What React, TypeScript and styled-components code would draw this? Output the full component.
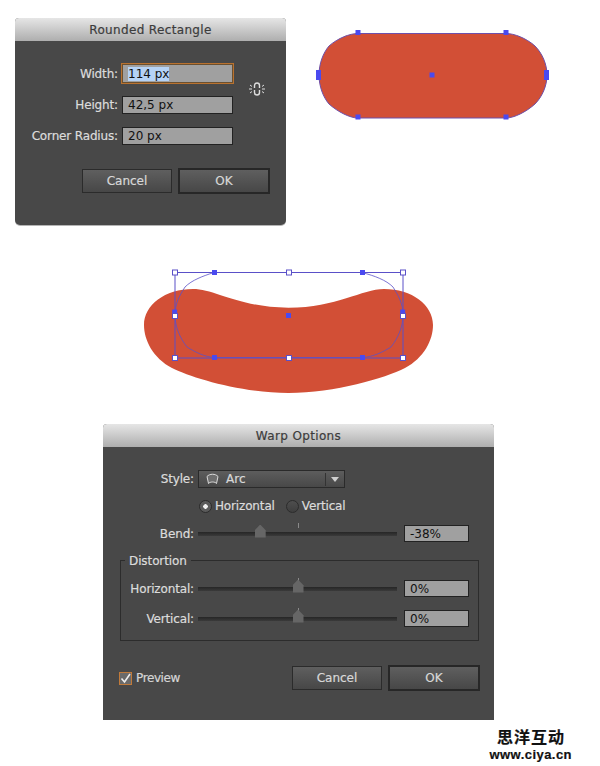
import * as React from "react"
import styled, { createGlobalStyle } from "styled-components"

const GlobalStyle = createGlobalStyle`
  html, body {
    margin: 0;
    padding: 0;
    background: #fff;
  }
  * {
    box-sizing: border-box;
  }
`

const Page = styled.div`
  width: 600px;
  height: 766px;
  overflow: hidden;
  background: #fff;
  font-family: "DejaVu Sans", "Liberation Sans", sans-serif;
  font-size: 12px;
  -webkit-text-stroke: 0.2px;
`

const TopRow = styled.div`
  display: flex;
  align-items: flex-start;
  padding: 18px 0 0 15px;
`

const Artboard = styled.svg<{ $left: number; $top: number }>`
  display: block;
  flex: none;
  margin-left: ${(p) => p.$left}px;
  margin-top: ${(p) => p.$top}px;
`

const Dialog = styled.div<{ $width: number; $height: number; $left?: number; $top?: number; $radius: number }>`
  flex: none;
  display: flex;
  flex-direction: column;
  width: ${(p) => p.$width}px;
  height: ${(p) => p.$height}px;
  margin-left: ${(p) => p.$left ?? 0}px;
  margin-top: ${(p) => p.$top ?? 0}px;
  background: #484848;
  border-radius: 4px 4px ${(p) => p.$radius}px ${(p) => p.$radius}px;
  box-shadow: ${(p) => (p.$radius ? "0 1px 0 #b4b4b4" : "none")};
  overflow: hidden;
`

const TitleBar = styled.div`
  height: 23px;
  flex: none;
  display: flex;
  align-items: center;
  justify-content: center;
  background: linear-gradient(#e6e6e6, #aeaeae);
  color: #3c3c3c;
  font-size: 12px;
  letter-spacing: 0.35px;
`

const FieldGrid = styled.div`
  display: grid;
  grid-template-columns: 103px 111px 40px;
  column-gap: 4px;
  row-gap: 13px;
  margin-top: 23px;
  align-items: center;
`

const Label = styled.label`
  color: #dcdcdc;
  font-size: 12px;
  letter-spacing: -0.15px;
  text-align: right;
  white-space: nowrap;
`

const Input = styled.div<{ $focused?: boolean; $height?: number }>`
  height: ${(p) => p.$height ?? 18}px;
  display: flex;
  align-items: center;
  padding-left: 5px;
  background: #a0a0a0;
  border: 1px solid #222;
  color: #111;
  font-size: 12px;
  white-space: nowrap;
  -webkit-text-stroke: 0;
  ${(p) => p.$focused && "outline: 1px solid #b9722f; outline-offset: 0; border-color: #6b5030;"}
`

const Selected = styled.span`
  background: #b5d3f6;
  color: #111;
`

const LinkSlot = styled.div`
  grid-column: 3;
  grid-row: 1 / span 2;
  padding-left: 11px;
  display: flex;
  align-items: center;
`

const Footer = styled.div<{ $top: number; $right: number; $left?: number }>`
  display: flex;
  align-items: center;
  justify-content: flex-end;
  gap: 6px;
  margin-top: ${(p) => p.$top}px;
  padding-right: ${(p) => p.$right}px;
  padding-left: ${(p) => p.$left ?? 0}px;
`

const Button = styled.div<{ $primary?: boolean }>`
  width: ${(p) => (p.$primary ? 92 : 90)}px;
  height: ${(p) => (p.$primary ? 26 : 24)}px;
  display: flex;
  align-items: center;
  justify-content: center;
  background: linear-gradient(#5f5f5f, #474747);
  border: ${(p) => (p.$primary ? "2px solid #272727" : "1px solid #2b2b2b")};
  color: #d8d8d8;
  font-size: 12px;
`

const PreviewCheck = styled.div`
  display: flex;
  align-items: center;
  gap: 4px;
  margin-right: auto;
  color: #d6d6d6;
  letter-spacing: -0.4px;
`

const CheckBox = styled.div`
  width: 13px;
  height: 13px;
  display: flex;
  align-items: center;
  justify-content: center;
  background: #6a6a6a;
  border: 1px solid #c17a3a;
`

const Row = styled.div<{ $top: number; $columns: string }>`
  display: grid;
  grid-template-columns: ${(p) => p.$columns};
  align-items: center;
  column-gap: 4px;
  margin-top: ${(p) => p.$top}px;
`

const Select = styled.div`
  height: 18px;
  display: flex;
  align-items: center;
  padding-left: 7px;
  gap: 7px;
  background: linear-gradient(#5d5d5d, #484848);
  border: 1px solid #2a2a2a;
  color: #d8d8d8;
`

const SelectArrow = styled.div`
  margin-left: auto;
  width: 19px;
  height: 13px;
  display: flex;
  align-items: center;
  justify-content: center;
  border-left: 1px solid #333;
  &::after {
    content: "";
    border-left: 4px solid transparent;
    border-right: 4px solid transparent;
    border-top: 5px solid #cfcfcf;
  }
`

const RadioGroup = styled.div`
  grid-column: 2;
  display: flex;
  align-items: center;
  height: 16px;
  color: #dcdcdc;
  letter-spacing: -0.15px;
`

const Radio = styled.div<{ $checked?: boolean; $gap?: number }>`
  width: 13px;
  height: 13px;
  flex: none;
  margin-right: 3px;
  margin-left: ${(p) => p.$gap ?? 1}px;
  border-radius: 50%;
  border: 1px solid #2c2c2c;
  background: ${(p) =>
    p.$checked
      ? "radial-gradient(circle, #f0f0f0 0 2px, #5a5a5a 2.5px)"
      : "linear-gradient(#4e4e4e, #3e3e3e)"};
`

const Track = styled.div`
  position: relative;
  height: 4px;
  margin-right: 3px;
  background: linear-gradient(#262626, #3a3a3a);
`

const Tick = styled.div`
  position: absolute;
  left: 50%;
  top: -9px;
  width: 1px;
  height: 5px;
  background: #8a8a8a;
`

const Thumb = styled.div<{ $value: number }>`
  position: absolute;
  left: ${(p) => (p.$value + 100) / 2}%;
  top: -7px;
  width: 11px;
  height: 13px;
  margin-left: -5px;
  background: #666;
  clip-path: polygon(50% 0, 100% 45%, 100% 100%, 0 100%, 0 45%);
`

const Group = styled.div`
  position: relative;
  width: 359px;
  height: 81px;
  margin: 18px 0 0 17px;
  padding-top: 19px;
  border: 1px solid #2c2c2c;
`

const Legend = styled.span`
  position: absolute;
  left: 4px;
  top: -7px;
  padding: 0 4px;
  background: #484848;
  color: #dcdcdc;
  line-height: 14px;
  letter-spacing: -0.1px;
`

const Watermark = styled.div`
  display: flex;
  flex-direction: column;
  align-items: flex-end;
  padding: 7px 28px 0 0;
  color: #111;
  font-weight: 700;
`

const WatermarkTitle = styled.div`
  font-family: "Noto Sans CJK SC", sans-serif;
  font-size: 16px;
  line-height: 18px;
  letter-spacing: 1px;
  margin: 0 7px 3px 0;
`

const WatermarkUrl = styled.div`
  font-family: "Liberation Sans", sans-serif;
  font-size: 13px;
  line-height: 13px;
  letter-spacing: 0.45px;
`

const LinkIcon: React.FC = () => (
  <svg width="18" height="18" viewBox="0 0 18 18" fill="none" stroke="#dedede">
    <path d="M6.5 8V5.5a2.5 2.5 0 0 1 5 0V8M6.5 10v2.5a2.5 2.5 0 0 0 5 0V10" strokeWidth="1.4" />
    <path d="M1 9h3M14 9h3M2 5l2 1.5M16 5l-2 1.5M2 13l2-1.5M16 13l-2-1.5" strokeWidth="1" />
  </svg>
)

const ArcIcon: React.FC = () => (
  <svg width="13" height="12" viewBox="0 0 13 12" fill="#6e6e6e" stroke="#dcdcdc">
    <path d="M1 3.5C3.5 0.5 9.5 0.5 12 3.5L10.5 10.5C9 8.5 4 8.5 2.5 10.5Z" />
  </svg>
)

const Handle: React.FC<{ x: number; y: number; w?: number; h?: number; hollow?: boolean }> = ({
  x,
  y,
  w = 5,
  h = 5,
  hollow,
}) => (
  <rect
    x={x - w / 2}
    y={y - h / 2}
    width={w}
    height={h}
    fill={hollow ? "#fff" : "#4a4af0"}
    stroke={hollow ? "#5a50c8" : "none"}
  />
)

const Slider: React.FC<{ value: number }> = ({ value }) => (
  <Track>
    <Tick />
    <Thumb $value={value} />
  </Track>
)

const RoundedRectDialog: React.FC = () => (
  <Dialog $width={271} $height={207} $radius={5}>
    <TitleBar>Rounded Rectangle</TitleBar>
    <FieldGrid>
      <Label>Width:</Label>
      <Input $focused $height={19}>
        <Selected>114 px</Selected>
      </Input>
      <LinkSlot>
        <LinkIcon />
      </LinkSlot>
      <Label>Height:</Label>
      <Input>42,5 px</Input>
      <Label>Corner Radius:</Label>
      <Input>20 px</Input>
    </FieldGrid>
    <Footer $top={23} $right={16}>
      <Button>Cancel</Button>
      <Button $primary>OK</Button>
    </Footer>
  </Dialog>
)

const SLIDER_COLUMNS = "202px 65px"

const WarpDialog: React.FC = () => (
  <Dialog $width={391} $height={296} $left={103} $top={19} $radius={0}>
    <TitleBar>Warp Options</TitleBar>
    <Row $top={23} $columns="91px 147px">
      <Label>Style:</Label>
      <Select>
        <ArcIcon />
        Arc
        <SelectArrow />
      </Select>
    </Row>
    <Row $top={10} $columns="91px 200px">
      <RadioGroup>
        <Radio $checked />
        Horizontal
        <Radio $gap={11} />
        Vertical
      </RadioGroup>
    </Row>
    <Row $top={11} $columns={`91px ${SLIDER_COLUMNS}`}>
      <Label>Bend:</Label>
      <Slider value={-38} />
      <Input $height={17}>-38%</Input>
    </Row>
    <Group>
      <Legend>Distortion</Legend>
      <Row $top={0} $columns={`73px ${SLIDER_COLUMNS}`}>
        <Label>Horizontal:</Label>
        <Slider value={0} />
        <Input $height={17}>0%</Input>
      </Row>
      <Row $top={13} $columns={`73px ${SLIDER_COLUMNS}`}>
        <Label>Vertical:</Label>
        <Slider value={0} />
        <Input $height={17}>0%</Input>
      </Row>
    </Group>
    <Footer $top={24} $right={14} $left={16}>
      <PreviewCheck>
        <CheckBox>
          <svg width="11" height="11" viewBox="0 0 11 11" fill="none" stroke="#eee" strokeWidth="1.6">
            <path d="M1.5 5.5L4.5 9L10 1" />
          </svg>
        </CheckBox>
        Preview
      </PreviewCheck>
      <Button>Cancel</Button>
      <Button $primary>OK</Button>
    </Footer>
  </Dialog>
)

const RoundedShape: React.FC = () => (
  <Artboard $left={24} $top={0} width={250} height={110} viewBox="310 18 250 110">
    <path
      d="M358 33.5H506C514 33.5 526 38 535 46C542 53 547 64 547 75C547 86 542 97 535 104C526 112 514 118 506 118H358C350 118 338 112 329 104C323 97 319 86 319 75C319 64 323 53 329 46C338 38 350 33.5 358 33.5Z"
      fill="#d24f36"
      stroke="#6d50ab"
    />
    <Handle x={358} y={32.5} />
    <Handle x={506} y={32.5} />
    <Handle x={358} y={117} />
    <Handle x={506} y={117} />
    <Handle x={432} y={75} />
    <Handle x={318.5} y={75} w={5} h={10} />
    <Handle x={546.5} y={75} w={5} h={10} />
  </Artboard>
)

const WarpedShape: React.FC = () => (
  <Artboard $left={130} $top={30} width={320} height={150} viewBox="130 255 320 150">
    <path
      d="M193 289C215 289 240 307.7 288.5 307.7C337 307.7 362 289 384 289C412 289 433 305 433 325C433 340 424 358 405 368C385 378 335 393 288.5 393C242 393 192 378 172 368C153 358 144 340 144 325C144 305 165 289 193 289Z"
      fill="#d24f36"
    />
    <g fill="none" stroke="#5a50c8">
      <rect x={175} y={272.5} width={228} height={85.5} />
      <path
        d="M214 272.5C203 276 192 280 185 287C180 295 175 303 175 315C175 327 180 338 187 347C195 352 205 357 214 357.5H362C373 357 383 352 391 347C398 338 403 327 403 315C403 303 398 295 393 287C386 280 375 276 362 272.5"
        strokeWidth="0.8"
      />
    </g>
    <Handle x={175} y={272.5} hollow />
    <Handle x={289} y={272.5} hollow />
    <Handle x={403} y={272.5} hollow />
    <Handle x={175} y={358} hollow />
    <Handle x={289} y={358} hollow />
    <Handle x={403} y={358} hollow />
    <Handle x={214.5} y={272.5} />
    <Handle x={362.5} y={272.5} />
    <Handle x={214.5} y={357.5} />
    <Handle x={362.5} y={357.5} />
    <Handle x={288.5} y={315.5} />
    <Handle x={174.7} y={312} />
    <Handle x={402.7} y={312} />
    <Handle x={175} y={316} hollow />
    <Handle x={403} y={316} hollow />
  </Artboard>
)

const App: React.FC = () => (
  <Page>
    <GlobalStyle />
    <TopRow>
      <RoundedRectDialog />
      <RoundedShape />
    </TopRow>
    <WarpedShape />
    <WarpDialog />
    <Watermark>
      <WatermarkTitle>思洋互动</WatermarkTitle>
      <WatermarkUrl>www.ciya.cn</WatermarkUrl>
    </Watermark>
  </Page>
)

export default App
